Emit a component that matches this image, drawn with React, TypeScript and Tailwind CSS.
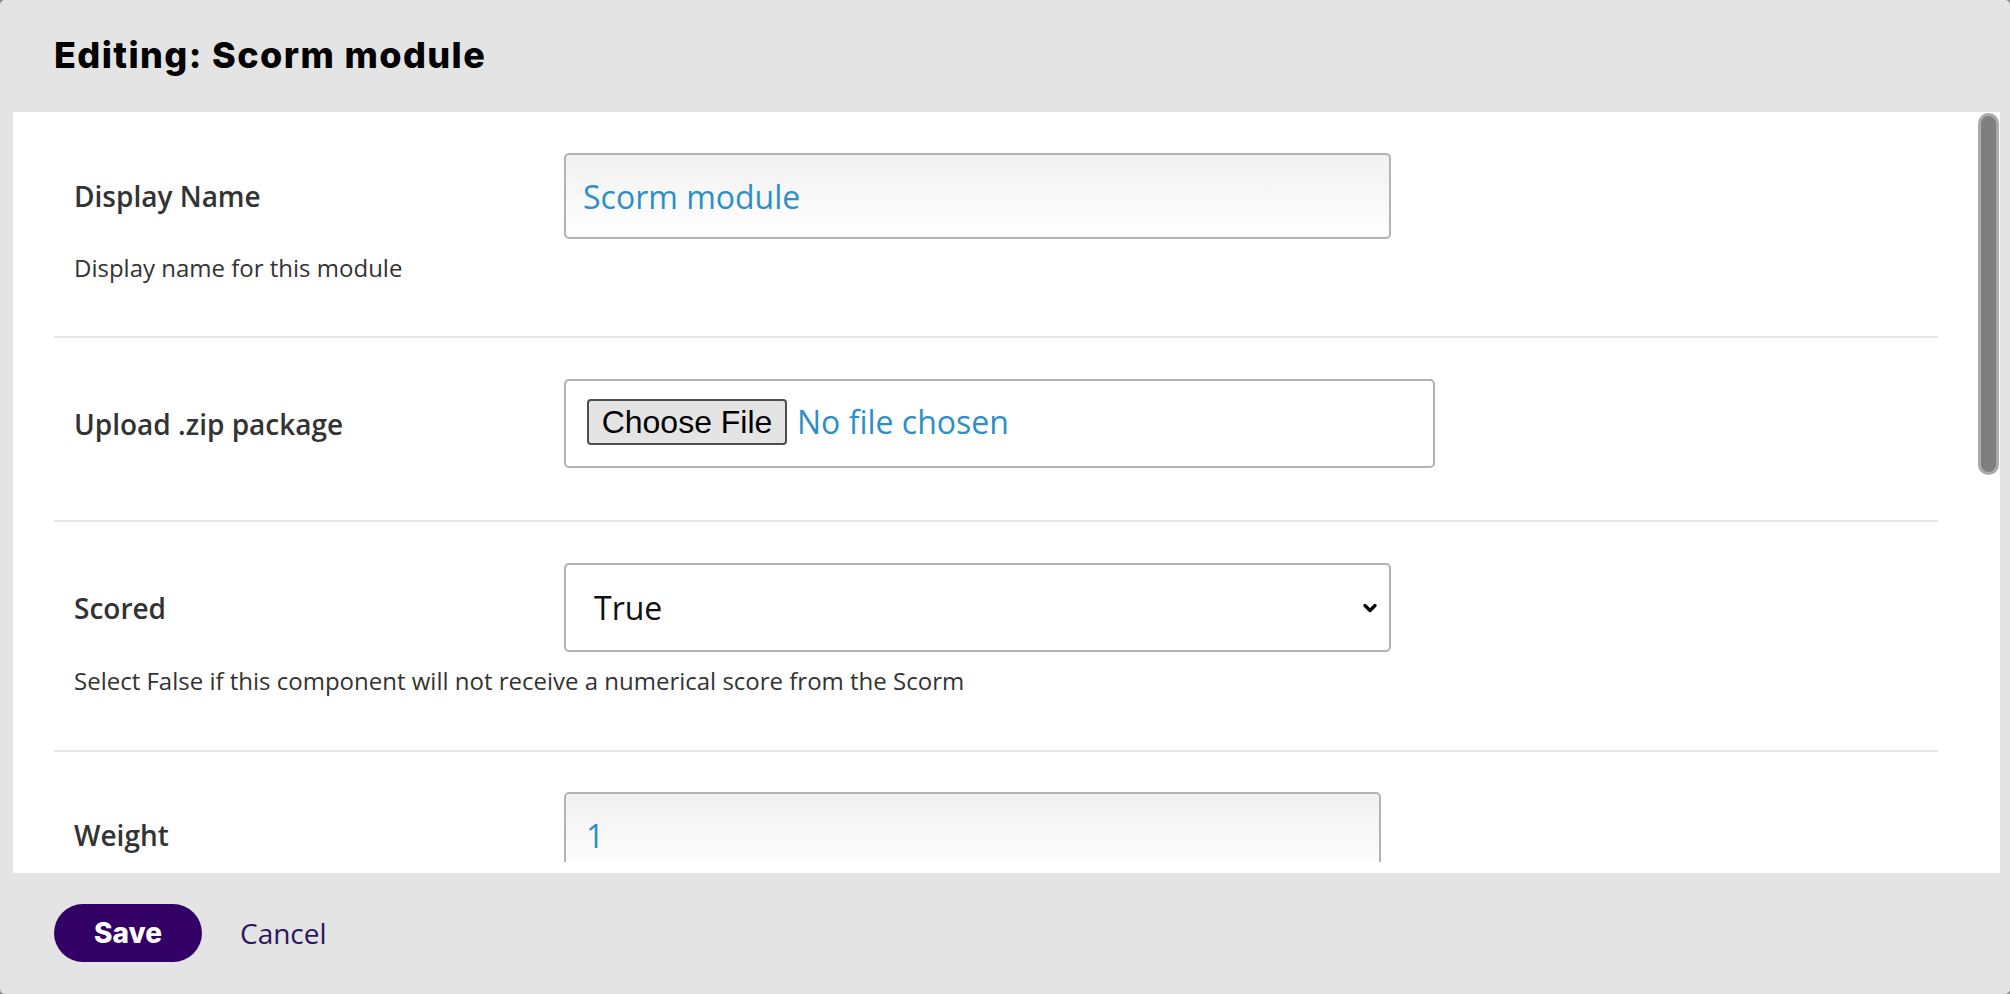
import { ChevronDown } from 'lucide-react';

const scoredHelp = 'Select False if this component will not receive a numerical score from the Scorm';

function Label({ children }: { children: React.ReactNode }) {
  return <div className="w-[490px] shrink-0 text-[28px] font-semibold text-[#333333]">{children}</div>;
}

function Help({ children }: { children: React.ReactNode }) {
  return <p className="mt-[12px] text-[24px] leading-[34px] text-[#333333]">{children}</p>;
}

export default function App() {
  return (
    <div className="h-[994px] w-full overflow-hidden bg-[#8a8a8a]">
      <div className="flex h-full flex-col rounded-[5px] bg-[#e4e4e4] font-['Open_Sans',sans-serif]">
        {/* Header */}
        <header className="flex h-[112px] shrink-0 items-center pl-[54px] pb-[2px]">
          <h1 className="font-['Inter',sans-serif] text-[36px] font-extrabold tracking-[1.4px] text-black">
            Editing: Scorm module
          </h1>
        </header>

        {/* Body */}
        <div className="ml-[13px] mr-[10px] flex h-[761px] shrink-0 bg-white pb-[11px]">
          <div className="flex-1 overflow-hidden pl-[41px] pr-[40px]">
            {/* Display name */}
            <div className="border-b-2 border-[#e6e6e6] px-[20px] pt-[41px] pb-[51px]">
              <div className="flex items-center">
                <Label>Display Name</Label>
                <input
                  readOnly
                  value="Scorm module"
                  className="h-[86px] w-[827px] rounded-[5px] border-2 border-[#b3b3b3] bg-linear-to-b from-[#f1f1f1] to-white px-[17px] text-[32px] text-[#2d8fc8] outline-none"
                />
              </div>
              <Help>Display name for this module</Help>
            </div>

            {/* Upload */}
            <div className="border-b-2 border-[#e6e6e6] px-[20px] pt-[41px] pb-[52px]">
              <div className="flex items-center">
                <Label>Upload .zip package</Label>
                <div className="flex h-[89px] w-[871px] items-center gap-[10px] rounded-[5px] border-2 border-[#b3b3b3] bg-white pl-[21px] pb-[3px]">
                  <button className="h-[46px] w-[200px] rounded-[4px] border-2 border-[#4d4d4d] bg-[#e4e4e4] font-['Liberation_Sans',sans-serif] text-[32px] leading-none text-black">
                    Choose File
                  </button>
                  <span className="text-[32px] text-[#2d8fc8]">No file chosen</span>
                </div>
              </div>
            </div>

            {/* Scored */}
            <div className="border-b-2 border-[#e6e6e6] px-[20px] pt-[41px] pb-[52px]">
              <div className="flex items-center">
                <Label>Scored</Label>
                <div className="flex h-[89px] w-[827px] items-center justify-between rounded-[5px] border-2 border-[#b3b3b3] bg-white pl-[28px] pr-[9px]">
                  <span className="text-[32px] text-[#111111]">True</span>
                  <ChevronDown className="h-[20px] w-[20px] text-black" strokeWidth={4} />
                </div>
              </div>
              <Help>{scoredHelp}</Help>
            </div>

            {/* Weight */}
            <div className="px-[20px] pt-[40px]">
              <div className="flex items-center">
                <Label>Weight</Label>
                <input
                  readOnly
                  value="1"
                  className="h-[86px] w-[817px] rounded-[5px] border-2 border-[#b3b3b3] bg-linear-to-b from-[#f1f1f1] to-white px-[20px] text-[32px] text-[#2d8fc8] outline-none"
                />
              </div>
            </div>
          </div>

          {/* Scrollbar */}
          <div className="w-[22px] shrink-0 pt-[1px] pr-[1px]">
            <div className="h-[362px] w-[21px] rounded-full border-[3px] border-[#ababab] bg-[#7f7f7f]" />
          </div>
        </div>

        {/* Footer */}
        <footer className="flex items-center gap-[38px] pl-[54px] pt-[31px]">
          <button className="h-[58px] w-[148px] rounded-full bg-[#330066] font-['Inter',sans-serif] text-[28px] font-extrabold text-white">
            Save
          </button>
          <button className="text-[28px] text-[#2b1760]">Cancel</button>
        </footer>
      </div>
    </div>
  );
}
